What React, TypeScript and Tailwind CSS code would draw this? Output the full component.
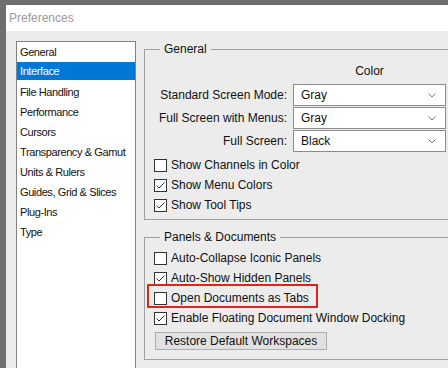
import React from 'react';

const categories = [
  'General',
  'Interface',
  'File Handling',
  'Performance',
  'Cursors',
  'Transparency & Gamut',
  'Units & Rulers',
  'Guides, Grid & Slices',
  'Plug-Ins',
  'Type',
];

const screenModes = [
  { label: 'Standard Screen Mode:', value: 'Gray' },
  { label: 'Full Screen with Menus:', value: 'Gray' },
  { label: 'Full Screen:', value: 'Black' },
];

function CheckBox({ checked }: { checked?: boolean }) {
  return (
    <span className="w-[13px] h-[13px] flex-none border border-[#333333] bg-white flex items-center justify-center">
      {checked && (
        <svg width="11" height="11" viewBox="0 0 11 11">
          <polyline points="1.5,5.5 4,8 9.5,2.5" fill="none" stroke="#333333" strokeWidth="1" />
        </svg>
      )}
    </span>
  );
}

function CheckRow({ label, checked }: { label: string; checked?: boolean }) {
  return (
    <div className="h-[20px] flex items-center gap-[4px] pl-[9px]">
      <CheckBox checked={checked} />
      <span>{label}</span>
    </div>
  );
}

function Dropdown({ value }: { value: string }) {
  return (
    <div className="w-[153px] h-[22px] border border-[#8c8c8c] bg-white flex items-center justify-between pl-[7px] pr-[9px]">
      <span>{value}</span>
      <svg width="8" height="5" viewBox="0 0 8 5">
        <polyline points="0.5,0.5 4,4 7.5,0.5" fill="none" stroke="#777777" strokeWidth="1" />
      </svg>
    </div>
  );
}

export default function App() {
  return (
    <div className="w-[448px] h-[368px] overflow-hidden bg-[#6e6e6e] pl-[6px] pt-[5px] text-[12px] text-[#111111] font-['Liberation_Sans',sans-serif]">
      <div className="flex flex-col h-full bg-[#ececec]">
        {/* title bar */}
        <div className="h-[26px] flex-none bg-white flex items-center pl-[3px] text-[12px] text-[#9a9a9a]">
          Preferences
        </div>

        <div className="flex pl-[10px] pt-[10px] gap-[8px]">
          {/* category list */}
          <div className="w-[120px] h-[340px] flex-none border border-[#828282] bg-white text-[11px] tracking-[-0.4px]">
            {categories.map((c) =>
              c === 'Interface' ? (
                <div key={c} className="h-[18px] mb-[2px] flex items-center pl-[3px] bg-[#0078d7] text-white">
                  {c}
                </div>
              ) : (
                <div key={c} className="h-[20px] flex items-center pl-[3px] whitespace-nowrap">
                  {c}
                </div>
              )
            )}
          </div>

          {/* settings */}
          <div className="w-[312px] flex-none flex flex-col mt-[1px]">
            <fieldset className="border border-[#a0a0a0] pb-[4px]">
              <legend className="ml-[15px] px-[4px] leading-[14px]">General</legend>
              <div className="flex mt-[8px] leading-[14px]">
                <div className="w-[148px]" />
                <div className="w-[153px] text-center">Color</div>
              </div>
              <div className="flex flex-col gap-[1px] mt-[6px]">
                {screenModes.map((m) => (
                  <div key={m.label} className="flex items-center gap-[6px]">
                    <div className="w-[142px] text-right">{m.label}</div>
                    <Dropdown value={m.value} />
                  </div>
                ))}
              </div>
              <div className="mt-[3px]">
                <CheckRow label="Show Channels in Color" />
                <CheckRow label="Show Menu Colors" checked />
                <CheckRow label="Show Tool Tips" checked />
              </div>
            </fieldset>

            <fieldset className="border border-[#a0a0a0] mt-[10px] pb-[9px]">
              <legend className="ml-[15px] px-[4px] leading-[14px]">Panels &amp; Documents</legend>
              <div className="mt-[4px]">
                <CheckRow label="Auto-Collapse Iconic Panels" />
                <CheckRow label="Auto-Show Hidden Panels" checked />
                <div className="relative">
                  <CheckRow label="Open Documents as Tabs" />
                  <div className="absolute left-[2px] -top-[4px] w-[171px] h-[24px] border-2 border-[#e2231a]" />
                </div>
                <CheckRow label="Enable Floating Document Window Docking" checked />
              </div>
              <button className="ml-[10px] mt-[4px] w-[172px] h-[18px] border border-[#adadad] bg-[#e1e1e1] flex items-center justify-center">
                Restore Default Workspaces
              </button>
            </fieldset>
          </div>
        </div>
      </div>
    </div>
  );
}
